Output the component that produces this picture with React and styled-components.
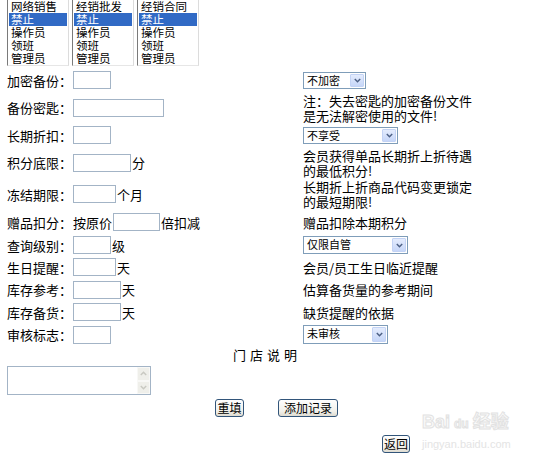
import React from "react";
import styled, { createGlobalStyle } from "styled-components";

const GlobalStyle = createGlobalStyle`
  html, body {
    margin: 0;
    padding: 0;
    background: #fff;
  }
  body {
    font-family: "Noto Sans CJK SC", "Liberation Sans", sans-serif;
    font-size: 13px;
    color: #000;
  }
`;

const lists = [
  ["网络销售", "禁止", "操作员", "领班", "管理员"],
  ["经销批发", "禁止", "操作员", "领班", "管理员"],
  ["经销合同", "禁止", "操作员", "领班", "管理员"],
];

const Chevron = ({ up }) => (
  <svg width="7" height="5" viewBox="0 0 7 5">
    <path
      d={up ? "M0.8 4 L3.5 1.3 L6.2 4" : "M0.8 1 L3.5 3.7 L6.2 1"}
      fill="none"
      stroke="currentColor"
      strokeWidth="1.5"
    />
  </svg>
);

const Select = ({ value, w, h }) => (
  <SelectBox $w={w} $h={h}>
    <SelectValue>{value}</SelectValue>
    <SelectButton>
      <Chevron />
    </SelectButton>
  </SelectBox>
);

const App = () => {
  return (
    <>
      <GlobalStyle />
      <Page>
        <ListGroup>
          {lists.map((items, i) => (
            <ListBox key={i}>
              {items.map((item, j) => (
                <ListItem key={j} $selected={j === 1}>
                  {item}
                </ListItem>
              ))}
            </ListBox>
          ))}
        </ListGroup>

        <Form>
          <FormRow $h={24}>
            <Label>加密备份：</Label>
            <Field>
              <TextInput $w={38} />
            </Field>
            <Note>
              <Select value="不加密" w={63} h={17} />
            </Note>
          </FormRow>

          <FormRow $h={31}>
            <Label>备份密匙：</Label>
            <Field>
              <TextInput $w={91} />
            </Field>
            <Note>注：失去密匙的加密备份文件是无法解密使用的文件!</Note>
          </FormRow>

          <FormRow $h={24}>
            <Label>长期折扣：</Label>
            <Field>
              <TextInput $w={38} />
            </Field>
            <Note>
              <Select value="不享受" w={95} h={17} />
            </Note>
          </FormRow>

          <FormRow $h={31}>
            <Label>积分底限：</Label>
            <Field>
              <TextInput $w={58} />
              <Suffix>分</Suffix>
            </Field>
            <Note>会员获得单品长期折上折待遇的最低积分!</Note>
          </FormRow>

          <FormRow $h={32}>
            <Label>冻结期限：</Label>
            <Field>
              <TextInput $w={43} />
              <Suffix>个月</Suffix>
            </Field>
            <Note>长期折上折商品代码变更锁定的最短期限!</Note>
          </FormRow>

          <FormRow $h={24}>
            <Label>赠品扣分：</Label>
            <Field>
              <Prefix>按原价</Prefix>
              <TextInput $w={47} />
              <Suffix>倍扣减</Suffix>
            </Field>
            <Note>赠品扣除本期积分</Note>
          </FormRow>

          <FormRow $h={22}>
            <Label>查询级别：</Label>
            <Field>
              <TextInput $w={38} />
              <Suffix>级</Suffix>
            </Field>
            <Note>
              <Select value="仅限自管" w={105} h={18} />
            </Note>
          </FormRow>

          <FormRow $h={22}>
            <Label>生日提醒：</Label>
            <Field>
              <TextInput $w={43} />
              <Suffix>天</Suffix>
            </Field>
            <Note>会员/员工生日临近提醒</Note>
          </FormRow>

          <FormRow $h={23}>
            <Label>库存参考：</Label>
            <Field>
              <TextInput $w={48} />
              <Suffix>天</Suffix>
            </Field>
            <Note>估算备货量的参考期间</Note>
          </FormRow>

          <FormRow $h={22}>
            <Label>库存备货：</Label>
            <Field>
              <TextInput $w={48} />
              <Suffix>天</Suffix>
            </Field>
            <Note>缺货提醒的依据</Note>
          </FormRow>

          <FormRow $h={23}>
            <Label>审核标志：</Label>
            <Field>
              <TextInput $w={38} />
            </Field>
            <Note>
              <Select value="未审核" w={85} h={19} />
            </Note>
          </FormRow>
        </Form>

        <Caption>门店说明</Caption>

        <MemoBox>
          <MemoText />
          <MemoScroll>
            <ScrollArrow>
              <Chevron up />
            </ScrollArrow>
            <ScrollArrow>
              <Chevron />
            </ScrollArrow>
          </MemoScroll>
        </MemoBox>

        <ButtonRow>
          <XPButton $w={29}>重填</XPButton>
          <XPButton $w={60}>添加记录</XPButton>
        </ButtonRow>

        <BackRow>
          <XPButton $w={28}>返回</XPButton>
        </BackRow>

        <Watermark>
          <WatermarkLogo>
            Bai<WatermarkPaw>du</WatermarkPaw>经验
          </WatermarkLogo>
          <WatermarkUrl>jingyan.baidu.com</WatermarkUrl>
        </Watermark>
      </Page>
    </>
  );
};

export default App;

const Page = styled.div`
  position: relative;
  width: 553px;
  height: 462px;
  padding-left: 7px;
  box-sizing: border-box;
  overflow: hidden;
`;

const ListGroup = styled.div`
  display: flex;
  gap: 3px;
  height: 66px;
  margin-bottom: 2px;
`;

const ListBox = styled.div`
  width: 62px;
  box-sizing: border-box;
  border-left: 1px solid #7a7a7a;
  border-right: 1px solid #dcdcdc;
  border-bottom: 1px solid #e6e6e6;
  padding: 0 1px;
`;

const ListItem = styled.div`
  height: 13px;
  line-height: 13px;
  font-size: 11.5px;
  padding-left: 2px;
  white-space: nowrap;
  background: ${(p) => (p.$selected ? "#316ac5" : "transparent")};
  color: ${(p) => (p.$selected ? "#fff" : "#000")};
`;

const Form = styled.div`
  display: flex;
  flex-direction: column;
`;

const FormRow = styled.div`
  display: grid;
  grid-template-columns: 66px 230px 176px;
  align-items: center;
  height: ${(p) => p.$h}px;
`;

const Label = styled.div`
  white-space: nowrap;
  line-height: 15px;
`;

const Field = styled.div`
  display: flex;
  align-items: center;
  white-space: nowrap;
`;

const TextInput = styled.div`
  width: ${(p) => p.$w}px;
  height: 18px;
  box-sizing: border-box;
  border: 1px solid #a3b4c6;
  background: #fff;
`;

const Prefix = styled.span`
  line-height: 15px;
  margin-right: 1px;
`;

const Suffix = styled.span`
  line-height: 15px;
  margin-left: 1px;
`;

const Note = styled.div`
  line-height: 15px;
  display: flex;
  align-items: center;
`;

const SelectBox = styled.div`
  display: flex;
  align-items: stretch;
  width: ${(p) => p.$w}px;
  height: ${(p) => p.$h}px;
  box-sizing: border-box;
  border: 1px solid #7f9db9;
  background: #fff;
  padding: 1px;
`;

const SelectValue = styled.div`
  flex: 1;
  font-size: 11px;
  line-height: 13px;
  padding-left: 2px;
  white-space: nowrap;
  overflow: hidden;
`;

const SelectButton = styled.div`
  width: 14px;
  display: flex;
  align-items: center;
  justify-content: center;
  box-sizing: border-box;
  border: 1px solid #c3d3f5;
  border-radius: 1px;
  background: linear-gradient(#e4ecfd, #c6d6f8);
  color: #4d6185;
`;

const Caption = styled.div`
  width: 520px;
  height: 20px;
  padding-top: 1px;
  box-sizing: border-box;
  line-height: 15px;
  text-align: center;
  letter-spacing: 4px;
`;

const MemoBox = styled.div`
  display: flex;
  width: 144px;
  height: 29px;
  box-sizing: border-box;
  border: 1px solid #a3b4c6;
  background: #fff;
`;

const MemoText = styled.div`
  flex: 1;
`;

const MemoScroll = styled.div`
  width: 13px;
  display: flex;
  flex-direction: column;
  background: #f6f6f3;
`;

const ScrollArrow = styled.div`
  flex: 1;
  display: flex;
  align-items: center;
  justify-content: center;
  background: #efefea;
  border: 1px solid #f8f8f6;
  color: #c9c9c2;
`;

const ButtonRow = styled.div`
  display: flex;
  gap: 34px;
  margin-top: 4px;
  padding-left: 208px;
`;

const XPButton = styled.div`
  width: ${(p) => p.$w}px;
  height: 18px;
  box-sizing: border-box;
  border: 1px solid #32557a;
  border-radius: 3px;
  background: linear-gradient(#fefefe, #f1f0ea 70%, #dedbd0);
  font-size: 12px;
  line-height: 15px;
  text-align: center;
  white-space: nowrap;
`;

const BackRow = styled.div`
  display: flex;
  margin-top: 18px;
  padding-left: 375px;
`;

const Watermark = styled.div`
  position: absolute;
  left: 422px;
  top: 410px;
  pointer-events: none;
`;

const WatermarkLogo = styled.div`
  font-family: "Liberation Sans", "Noto Sans CJK SC", sans-serif;
  font-size: 18px;
  font-weight: bold;
  line-height: 24px;
  -webkit-text-stroke: 1px #e2e2e2;
  color: #fafafa;
`;

const WatermarkPaw = styled.span`
  font-size: 12px;
  margin: 0 4px;
`;

const WatermarkUrl = styled.div`
  font-family: "Liberation Sans", sans-serif;
  font-size: 11px;
  line-height: 12px;
  margin-top: 2px;
  color: #e4e4e4;
`;
